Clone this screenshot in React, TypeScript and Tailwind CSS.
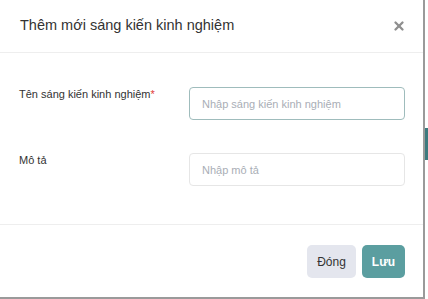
import { X } from 'lucide-react'

export default function App() {
  return (
    <div className="flex h-[299px] w-[428px] bg-white" style={{ fontFamily: '"Liberation Sans", Arial, sans-serif' }}>
      <div className="flex h-[299px] w-[425px] flex-col border-r-2 border-b-2 border-[#9a9a9a] bg-white">
        {/* header */}
        <div className="flex h-[53px] shrink-0 items-center justify-between border-b border-[#eeeeee] pl-[20px] pr-[17px]">
          <h2 className="text-[14.5px] text-[#333333]">Thêm mới sáng kiến kinh nghiệm</h2>
          <X className="h-[14px] w-[14px] text-[#8f8f8f]" strokeWidth={4} />
        </div>

        {/* body */}
        <div className="flex flex-1 flex-col gap-[33px] pl-[19px] pr-[18px] pt-[34px]">
          <div className="flex items-start">
            <label className="w-[170px] text-[11px] leading-[14px] text-[#333333]">
              Tên sáng kiến kinh nghiệm<span className="text-[#e03a3a]">*</span>
            </label>
            <input
              className="h-[33px] flex-1 rounded-[4px] border border-[#9fbcbc] px-[12px] text-[11px] text-[#333] placeholder:text-[#a9aeb6] outline-none"
              placeholder="Nhập sáng kiến kinh nghiệm"
            />
          </div>
          <div className="flex items-start">
            <label className="w-[170px] text-[11px] leading-[14px] text-[#333333]">Mô tả</label>
            <input
              className="h-[33px] flex-1 rounded-[4px] border border-[#e6e6e6] px-[12px] text-[11px] text-[#333] placeholder:text-[#a9aeb6] outline-none"
              placeholder="Nhập mô tả"
            />
          </div>
        </div>

        {/* footer */}
        <div className="flex h-[73px] shrink-0 items-start justify-end gap-[6px] border-t border-[#eeeeee] pr-[18px] pt-[20px]">
          <button className="h-[33px] w-[49px] rounded-[5px] bg-[#e4e6ee] text-[12px] text-[#333]">Đóng</button>
          <button className="h-[33px] w-[43px] rounded-[5px] bg-[#5b9ea0] text-[12px] font-bold text-white">Lưu</button>
        </div>
      </div>
      <div className="flex w-[3px] flex-col">
        <div className="mt-[128px] h-[32px] w-[3px] bg-[#3d7a7e]" />
      </div>
    </div>
  )
}
